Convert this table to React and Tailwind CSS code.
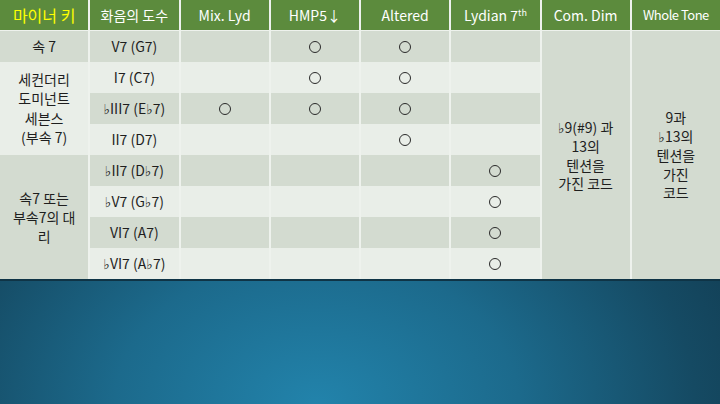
import React from 'react';

const FONT = { fontFamily: '"Noto Sans CJK KR", "Noto Sans", sans-serif' };

const HEADERS = ['화음의 도수', 'Mix. Lyd', 'HMP5↓', 'Altered'];

// flat sign rendered with DejaVu so it stays narrow like the original
function Flat() {
  return <span className="text-[14px]" style={{ fontFamily: '"DejaVu Sans", sans-serif' }}>♭</span>;
}

const ROWS = [
  { chord: <>V7 (G7)</>, marks: [false, true, true, false] },
  { chord: <>I7 (C7)</>, marks: [false, true, true, false] },
  { chord: <><Flat />III7 (E<Flat />7)</>, marks: [true, true, true, false] },
  { chord: <>II7 (D7)</>, marks: [false, false, true, false] },
  { chord: <><Flat />II7 (D<Flat />7)</>, marks: [false, false, false, true] },
  { chord: <><Flat />V7 (G<Flat />7)</>, marks: [false, false, false, true] },
  { chord: <>VI7 (A7)</>, marks: [false, false, false, true] },
  { chord: <><Flat />VI7 (A<Flat />7)</>, marks: [false, false, false, true] },
];

function Circle() {
  return <span className="block w-[12px] h-[12px] rounded-full border border-[#2a2a2a]" />;
}

function Cell({ dark, children, className = '' }) {
  return (
    <div className={`flex items-center justify-center text-[14px] text-[#1e1e1e] ${dark ? 'bg-[#d3dbd0]' : 'bg-[#e9eee8]'} ${className}`}>
      {children}
    </div>
  );
}

export default function App() {
  return (
    <div
      className="w-[720px] h-[404px] overflow-hidden bg-[radial-gradient(ellipse_70%_90%_at_44%_100%,#2283ab_0%,#1c6a8c_40%,#154a63_75%,#113a4f_100%)]"
      style={FONT}
    >
      <div className="bg-[#eef2ed]">
        {/* header */}
        <div className="grid grid-cols-8 gap-x-[2px] h-[30px] mb-px">
          <div className="bg-[#5c8b3d] flex items-center justify-center text-[16px] text-[#ffff00]">마이너 키</div>
          {HEADERS.map((h) => (
            <div key={h} className="bg-[#5c8b3d] flex items-center justify-center text-[14px] text-white">{h}</div>
          ))}
          <div className="bg-[#5c8b3d] flex items-center justify-center text-[14px] text-white">
            <span>Lydian 7<sup className="text-[9px] -top-[5px]">th</sup></span>
          </div>
          <div className="bg-[#5c8b3d] flex items-center justify-center text-[14px] text-white">Com. Dim</div>
          <div className="bg-[#5c8b3d] flex items-center justify-center text-[13px] tracking-[-0.5px] text-white">Whole Tone</div>
        </div>

        {/* body */}
        <div className="grid grid-cols-8 gap-x-[2px] grid-rows-[repeat(8,31px)]">
          {ROWS.map((r, i) => {
            const dark = i % 2 === 0;
            return (
              <React.Fragment key={i}>
                {i === 0 && <Cell dark>속 7</Cell>}
                {i === 1 && (
                  <Cell className="row-span-3">
                    <div className="leading-[19.5px] text-center">세컨더리<br />도미넌트<br />세븐스<br />(부속 7)</div>
                  </Cell>
                )}
                {i === 4 && (
                  <Cell dark className="row-span-4">
                    <div className="leading-[19px] text-center">속7 또는<br />부속7의 대<br />리</div>
                  </Cell>
                )}
                <Cell dark={dark}><span>{r.chord}</span></Cell>
                {r.marks.map((m, j) => (
                  <Cell key={j} dark={dark}>{m && <Circle />}</Cell>
                ))}
                {i === 0 && (
                  <>
                    <Cell dark className="row-span-8">
                      <div className="leading-[18.5px] text-center"><Flat />9(#9) 과<br />13의<br />텐션을<br />가진 코드</div>
                    </Cell>
                    <Cell dark className="row-span-8">
                      <div className="leading-[18.5px] text-center">9과<br /><Flat />13의<br />텐션을<br />가진<br />코드</div>
                    </Cell>
                  </>
                )}
              </React.Fragment>
            );
          })}
        </div>
      </div>
      <div className="h-[2px] bg-[#0f3446]" />
    </div>
  );
}
